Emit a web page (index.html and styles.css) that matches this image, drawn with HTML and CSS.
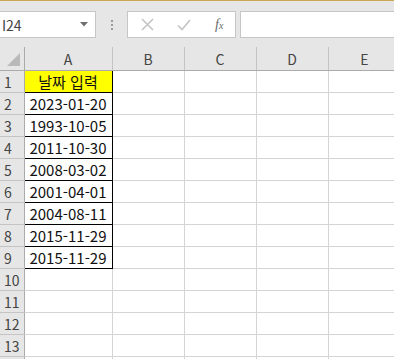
FILE: index.html
```html
<!DOCTYPE html>
<html lang="ko">
<head>
    <meta charset="UTF-8">
    <title>날짜 입력</title>
    <link rel="stylesheet" href="styles.css">
</head>
<body>
    <div class="app">
        <div class="formula-bar">
            <div class="name-box">
                <span class="cell-ref">I24</span>
                <svg class="dropdown" width="8" height="5" viewBox="0 0 8 5"><path d="M0 0H8L4 4.5Z" fill="#6e6e6e"/></svg>
            </div>
            <div class="grip">
                <span></span><span></span><span></span>
            </div>
            <div class="fx-buttons">
                <svg class="btn-icon" width="13" height="13" viewBox="0 0 13 13"><path d="M1 1L12 12M12 1L1 12" stroke="#c4c4c4" stroke-width="1.6" fill="none"/></svg>
                <svg class="btn-icon" width="14" height="12" viewBox="0 0 14 12"><path d="M1 6.5L5 10.5L13 1" stroke="#c4c4c4" stroke-width="1.6" fill="none"/></svg>
                <span class="fx">f<sub>x</sub></span>
            </div>
            <div class="formula-input"></div>
        </div>

        <table class="sheet">
            <colgroup>
                <col class="col-head">
                <col class="col-a">
                <col class="col-std">
                <col class="col-std">
                <col class="col-std">
                <col class="col-std">
            </colgroup>
            <thead>
                <tr>
                    <th class="corner"><div class="select-all"></div></th>
                    <th>A</th><th>B</th><th>C</th><th>D</th><th>E</th>
                </tr>
            </thead>
            <tbody>
                <tr><th>1</th><td class="boxed title">날짜 입력</td><td></td><td></td><td></td><td></td></tr>
                <tr><th>2</th><td class="boxed">2023-01-20</td><td></td><td></td><td></td><td></td></tr>
                <tr><th>3</th><td class="boxed">1993-10-05</td><td></td><td></td><td></td><td></td></tr>
                <tr><th>4</th><td class="boxed">2011-10-30</td><td></td><td></td><td></td><td></td></tr>
                <tr><th>5</th><td class="boxed">2008-03-02</td><td></td><td></td><td></td><td></td></tr>
                <tr><th>6</th><td class="boxed">2001-04-01</td><td></td><td></td><td></td><td></td></tr>
                <tr><th>7</th><td class="boxed">2004-08-11</td><td></td><td></td><td></td><td></td></tr>
                <tr><th>8</th><td class="boxed">2015-11-29</td><td></td><td></td><td></td><td></td></tr>
                <tr><th>9</th><td class="boxed">2015-11-29</td><td></td><td></td><td></td><td></td></tr>
                <tr><th>10</th><td></td><td></td><td></td><td></td><td></td></tr>
                <tr><th>11</th><td></td><td></td><td></td><td></td><td></td></tr>
                <tr><th>12</th><td></td><td></td><td></td><td></td><td></td></tr>
                <tr><th>13</th><td></td><td></td><td></td><td></td><td></td></tr>
                <tr><th></th><td></td><td></td><td></td><td></td><td></td></tr>
            </tbody>
        </table>
    </div>
</body>
</html>
```

FILE: styles.css
```css
/* General */
body {
    margin: 0;
    padding: 0;
    background-color: #e6e6e6;
    font-family: "Noto Sans CJK KR", "Noto Sans", sans-serif;
    overflow: hidden;
}

.app {
    width: 394px;
    height: 359px;
    overflow: hidden;
    border-top: 1px solid #c9a652;
}

/* Formula bar */
.formula-bar {
    display: flex;
    align-items: stretch;
    height: 27px;
    margin-top: 10px;
    margin-bottom: 9px;
}

.name-box {
    display: flex;
    align-items: center;
    justify-content: space-between;
    width: 97px;
    margin-left: -1px;
    padding: 0 7px 0 2px;
    box-sizing: border-box;
    background-color: #ffffff;
    border: 1px solid #c6c6c6;
    color: #444444;
    font-size: 14px;
}

.grip {
    display: flex;
    flex-direction: column;
    justify-content: center;
    align-items: center;
    gap: 2px;
    width: 31px;
}

.grip span {
    width: 2px;
    height: 2px;
    background-color: #9a9a9a;
}

.fx-buttons {
    display: flex;
    align-items: center;
    width: 109px;
    padding-left: 13px;
    gap: 23px;
    box-sizing: border-box;
    background-color: #ffffff;
    border: 1px solid #c6c6c6;
}

.fx {
    margin-left: 1px;
    font-family: "Liberation Serif", serif;
    font-style: italic;
    font-size: 14px;
    color: #6a6a6a;
}

.fx sub {
    font-size: 10px;
    vertical-align: 0;
}

.formula-input {
    flex: 1;
    margin-left: 4px;
    margin-right: -2px;
    background-color: #ffffff;
    border: 1px solid #c6c6c6;
}

/* Sheet grid */
.sheet {
    border-collapse: collapse;
    table-layout: fixed;
    width: 400px;
    background-color: #ffffff;
}

.col-head { width: 24px; }
.col-a { width: 88px; }
.col-std { width: 72px; }

.sheet thead th {
    height: 23px;
    padding: 0;
    background-color: #e6e6e6;
    border-left: 1px solid #c4c4c4;
    border-bottom: 1px solid #ababab;
    font-weight: normal;
    font-size: 14px;
    color: #444444;
    text-align: center;
}

.sheet thead th.corner {
    border-left: none;
    border-right: 1px solid #ababab;
    position: relative;
}

.select-all {
    position: absolute;
    right: 4px;
    bottom: 4px;
    width: 0;
    height: 0;
    border-left: 13px solid transparent;
    border-bottom: 13px solid #b9b9b9;
}

.sheet tbody th {
    height: 21px;
    padding: 0 0 0 4px;
    background-color: #e6e6e6;
    border-bottom: 1px solid #c4c4c4;
    border-right: 1px solid #ababab;
    font-weight: normal;
    font-size: 14px;
    color: #444444;
    text-align: left;
}

.sheet td {
    padding: 0;
    border: 1px solid #d4d4d4;
    font-size: 15px;
    color: #111111;
    text-align: center;
    white-space: nowrap;
}

.sheet td.boxed {
    border: 1px solid #000000;
}

.sheet td.title {
    background-color: #ffff00;
}
```
